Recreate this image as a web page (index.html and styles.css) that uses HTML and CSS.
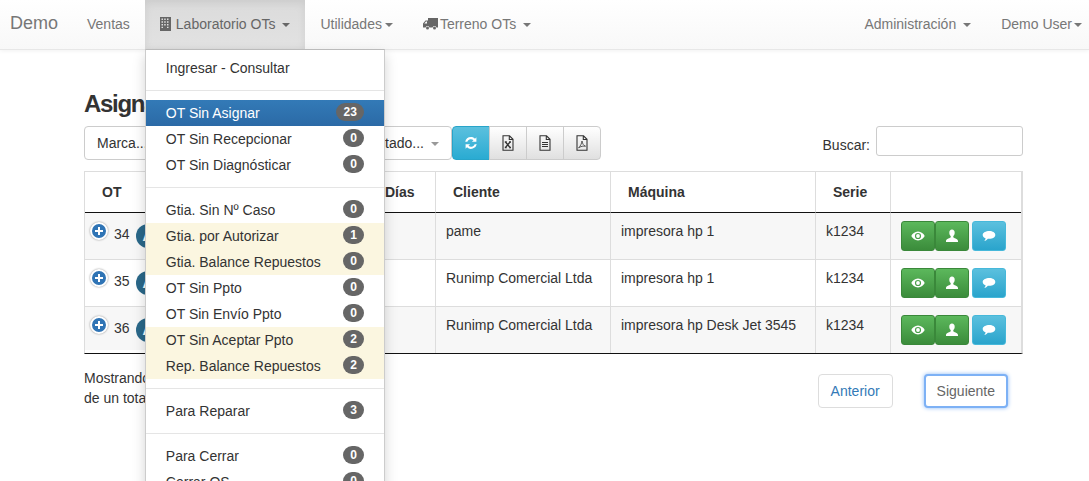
FILE: index.html
```html
<!DOCTYPE html>
<html lang="es">
<head>
<meta charset="utf-8">
<title>Demo</title>
<link rel="stylesheet" href="styles.css">
</head>
<body>
<svg class="sprites" width="0" height="0" aria-hidden="true">
  <symbol id="i-eye" viewBox="0 0 14 14"><path fill="currentColor" fill-rule="evenodd" d="M7 2.6C3.8 2.6 1.3 5 .3 7c1 2 3.5 4.4 6.7 4.4S12.700 9 13.700 7C12.700 5 10.200 2.600 7 2.600zM7 3.900A3.100 3.100 0 1 1 7 10.100 3.100 3.100 0 0 1 7 3.900zM7 5.100A1.900 1.900 0 1 0 7 8.900 1.900 1.900 0 0 0 7 5.100z"/></symbol>
  <symbol id="i-user" viewBox="0 0 14 14"><path fill="currentColor" d="M7 .6c1.700 0 2.700 1.300 2.700 3.100 0 1.400-.6 2.700-1.400 3.300v1.300c0 .7 4.700 1.500 4.700 3.700v.9H1v-.9c0-2.200 4.700-3 4.700-3.700V7C4.900 6.400 4.300 5.100 4.300 3.700 4.300 1.900 5.300.6 7 .6z"/></symbol>
  <symbol id="i-comment" viewBox="0 0 14 14"><path fill="currentColor" d="M7.300 2C10.700 2 13.300 3.600 13.300 5.900S10.700 9.800 7.300 9.800C6.800 9.800 6.300 9.800 5.800 9.700 5 10.700 3.600 11.700 2.300 11.900 3 11.200 3.500 10.200 3.600 9.200 1.800 8.500.7 7.300.7 5.900.7 3.600 3.900 2 7.300 2z"/></symbol>
  <symbol id="i-file" viewBox="0 0 12 16"><path fill="none" stroke="currentColor" stroke-width="1.100" d="M1 .8h6.500L11 4.300V15.200H1zM7.300 1v3.500H11"/></symbol>
</svg>

<header class="navbar">
  <a class="brand">Demo</a>
  <ul class="nav">
    <li class="nav-item">Ventas</li>
    <li class="nav-item is-open">
      <svg class="nav-icon" width="11" height="14" viewBox="0 0 11 14"><path fill="currentColor" fill-rule="evenodd" d="M0 0h11v14H0zM1.500 1.500v1.500h1.500V1.500zM4.200 1.500v1.500h1.500V1.500zM7 1.500v1.500h1.500V1.500zM1.500 4.200v1.500h1.500V4.200zM4.200 4.200v1.500h1.500V4.200zM7 4.200v1.500h1.500V4.200zM1.500 7v1.500h1.500V7zM4.200 7v1.500h1.500V7zM7 7v1.500h1.500V7zM1.500 9.700v1.300h1.500V9.700zM7 9.700v1.300h1.500V9.700z"/></svg>
      <span>Laboratorio OTs</span><i class="caret caret-spaced"></i>
      <ul class="dropdown">
        <li class="dd-item">Ingresar - Consultar</li>
        <li class="dd-divider"></li>
        <li class="dd-item is-active">OT Sin Asignar<span class="badge">23</span></li>
        <li class="dd-item">OT Sin Recepcionar<span class="badge">0</span></li>
        <li class="dd-item">OT Sin Diagnósticar<span class="badge">0</span></li>
        <li class="dd-divider"></li>
        <li class="dd-item">Gtia. Sin Nº Caso<span class="badge">0</span></li>
        <li class="dd-item is-warn">Gtia. por Autorizar<span class="badge">1</span></li>
        <li class="dd-item is-warn">Gtia. Balance Repuestos<span class="badge">0</span></li>
        <li class="dd-item">OT Sin Ppto<span class="badge">0</span></li>
        <li class="dd-item">OT Sin Envío Ppto<span class="badge">0</span></li>
        <li class="dd-item is-warn">OT Sin Aceptar Ppto<span class="badge">2</span></li>
        <li class="dd-item is-warn">Rep. Balance Repuestos<span class="badge">2</span></li>
        <li class="dd-divider"></li>
        <li class="dd-item">Para Reparar<span class="badge">3</span></li>
        <li class="dd-divider"></li>
        <li class="dd-item">Para Cerrar<span class="badge">0</span></li>
        <li class="dd-item">Cerrar OS<span class="badge">0</span></li>
      </ul>
    </li>
    <li class="nav-item">Utilidades<i class="caret caret-near"></i></li>
    <li class="nav-item">
      <svg class="nav-icon nav-icon-truck" width="15" height="12" viewBox="0 0 15 12"><path fill="currentColor" fill-rule="evenodd" d="M5 0h10v9.500h-1.600a2 2 0 0 0-3.800 0H6.400a2 2 0 0 0-3.800 0H0V5.500L2.500 2.500H5zM1.300 5.600h2.700V3.500H3zM4.500 8.500a1.500 1.500 0 1 1 0 3 1.500 1.500 0 0 1 0-3zM11.500 8.500a1.500 1.500 0 1 1 0 3 1.500 1.500 0 0 1 0-3z"/></svg>
      <span>Terreno OTs</span><i class="caret caret-spaced"></i>
    </li>
  </ul>
  <ul class="nav nav-right">
    <li class="nav-item">Administración<i class="caret caret-spaced"></i></li>
    <li class="nav-item nav-item-last">Demo User<i class="caret caret-tight"></i></li>
  </ul>
</header>

<main class="page">
  <h3 class="title">Asignar OT</h3>

  <div class="toolbar">
    <div class="filters">
      <button class="select select-brand" type="button">Marca...</button>
      <button class="select select-state" type="button">Estado...<i class="caret caret-muted"></i></button>
      <button class="tool tool-refresh" type="button" aria-label="Actualizar">
        <svg width="14" height="14" viewBox="0 0 14 14"><path fill="#fff" d="M7 1c1.600 0 3 .6 4 1.700L12.400 1.300V5.800H7.900L9.500 4.200A3.800 3.800 0 0 0 3.300 5.800H1.200A5.900 5.900 0 0 1 7 1zM1.600 8.200H6.100L4.500 9.800A3.800 3.800 0 0 0 10.700 8.200H12.800A5.900 5.900 0 0 1 3 11.300L1.600 12.700z"/></svg>
      </button>
      <button class="tool" type="button" aria-label="Excel">
        <svg class="file" width="12" height="16"><use href="#i-file"/><path fill="none" stroke="currentColor" stroke-width="1.300" d="M3.500 7l4.500 5.500M8 7l-4.500 5.500M2.800 7h2M7 7h2M2.800 12.500h2M7 12.500h2"/></svg>
      </button>
      <button class="tool" type="button" aria-label="Texto">
        <svg class="file" width="12" height="16"><use href="#i-file"/><path fill="none" stroke="currentColor" d="M3 7.500h6M3 9.500h6M3 11.500h6"/></svg>
      </button>
      <button class="tool tool-last" type="button" aria-label="PDF">
        <svg class="file" width="12" height="16"><use href="#i-file"/><path fill="none" stroke="currentColor" stroke-width=".8" d="M6 6c-.4 2.500-1.400 5-3.400 6.800M6 6c.5 3 1.600 4.500 3.500 5.200-2-.3-4.500 0-6.900 1.600"/></svg>
      </button>
    </div>
    <label class="search">Buscar:<input class="search-input" type="text" aria-label="Buscar"></label>
  </div>

  <table class="grid">
    <colgroup>
      <col class="c-ot"><col class="c-dias"><col class="c-cliente"><col class="c-maquina"><col class="c-serie"><col class="c-acciones">
    </colgroup>
    <thead>
      <tr><th>OT</th><th>Días</th><th>Cliente</th><th>Máquina</th><th>Serie</th><th></th></tr>
    </thead>
    <tbody>
      <tr>
        <td class="td-ot"><span class="plus"></span><span class="ot-num">34</span><span class="avatar">A</span></td>
        <td></td><td>pame</td><td>impresora hp 1</td><td>k1234</td>
        <td class="td-actions"><div class="actions"><button class="act act-green" type="button" aria-label="Ver"><svg width="14" height="14"><use href="#i-eye"/></svg></button><button class="act act-green" type="button" aria-label="Asignar"><svg width="14" height="14"><use href="#i-user"/></svg></button><button class="act act-blue" type="button" aria-label="Comentar"><svg width="14" height="14"><use href="#i-comment"/></svg></button></div></td>
      </tr>
      <tr>
        <td class="td-ot"><span class="plus"></span><span class="ot-num">35</span><span class="avatar">A</span></td>
        <td></td><td>Runimp Comercial Ltda</td><td>impresora hp 1</td><td>k1234</td>
        <td class="td-actions"><div class="actions"><button class="act act-green" type="button" aria-label="Ver"><svg width="14" height="14"><use href="#i-eye"/></svg></button><button class="act act-green" type="button" aria-label="Asignar"><svg width="14" height="14"><use href="#i-user"/></svg></button><button class="act act-blue" type="button" aria-label="Comentar"><svg width="14" height="14"><use href="#i-comment"/></svg></button></div></td>
      </tr>
      <tr>
        <td class="td-ot"><span class="plus"></span><span class="ot-num">36</span><span class="avatar">A</span></td>
        <td></td><td>Runimp Comercial Ltda</td><td>impresora hp Desk Jet 3545</td><td>k1234</td>
        <td class="td-actions"><div class="actions"><button class="act act-green" type="button" aria-label="Ver"><svg width="14" height="14"><use href="#i-eye"/></svg></button><button class="act act-green" type="button" aria-label="Asignar"><svg width="14" height="14"><use href="#i-user"/></svg></button><button class="act act-blue" type="button" aria-label="Comentar"><svg width="14" height="14"><use href="#i-comment"/></svg></button></div></td>
      </tr>
    </tbody>
  </table>

  <div class="footer-row">
    <div class="info">Mostrando 1 a 3<br>de un total de 3</div>
    <div class="pager">
      <a class="page-btn">Anterior</a>
      <a class="page-btn is-focus">Siguiente</a>
    </div>
  </div>
</main>
</body>
</html>
```

FILE: styles.css
```css
* { box-sizing: border-box; }

html, body {
  height: 481px;
  overflow: hidden;
}

body {
  margin: 0;
  font: 14px/20px "Liberation Sans", Arial, sans-serif;
  color: #333;
  background: #fff;
}

.sprites { position: absolute; }

ul { list-style: none; margin: 0; padding: 0; }

button { font: inherit; }

/* Navbar */
.navbar {
  display: flex;
  height: 50px;
  padding-left: 10px;
  padding-right: 2px;
  background: linear-gradient(#fff, #f8f8f8);
  border-bottom: 1px solid #e7e7e7;
  box-shadow: 0 1px 4px rgba(0, 0, 0, .06);
  color: #777;
}

.brand {
  font-size: 18px;
  line-height: 47px;
  width: 62px;
}

.nav { display: flex; }
.nav-right { margin-left: auto; }

.nav-item {
  position: relative;
  display: flex;
  align-items: center;
  height: 49px;
  padding: 0 15px 2px;
  white-space: nowrap;
}

.nav-item-last { padding-right: 5px; }

.is-open {
  background: linear-gradient(#dbdbdb, #e2e2e2);
  box-shadow: inset 0 3px 9px rgba(0, 0, 0, .075);
  color: #666;
}

.nav-icon { margin-right: 5px; color: #666; }
.nav-icon-truck { margin-right: 2px; }

.caret {
  display: inline-block;
  width: 0;
  height: 0;
  margin-top: 2px;
  border-top: 4px solid currentColor;
  border-left: 4px solid transparent;
  border-right: 4px solid transparent;
}
.caret-spaced { margin-left: 7px; }
.caret-near { margin-left: 3px; }
.caret-tight { margin-left: 2px; }
.caret-muted { margin-left: 7px; color: #999; }

/* Dropdown */
.dropdown {
  position: absolute;
  z-index: 10;
  top: 49px;
  left: 0;
  width: 240px;
  padding: 5px 0;
  background: #fff;
  border: 1px solid #ccc;
  border-top-color: #bbb;
  box-shadow: 0 6px 12px rgba(0, 0, 0, .175);
  color: #333;
}

.dd-item {
  display: flex;
  justify-content: space-between;
  align-items: flex-start;
  height: 26px;
  padding: 3px 20px;
}

.dd-divider {
  height: 1px;
  margin: 9px 0;
  background: #e5e5e5;
}

.is-active {
  background: linear-gradient(#337ab7, #2b6aa6);
  color: #fff;
}

.is-warn { background: #fbf6e0; }

.badge {
  min-width: 20px;
  height: 18px;
  padding: 3px 7px;
  border-radius: 10px;
  background: #666;
  color: #fff;
  font-size: 12px;
  font-weight: bold;
  line-height: 12px;
  text-align: center;
}

/* Page */
.page { padding: 41px 66px 0 84px; }

.title {
  margin: 0 0 9px;
  font-size: 24px;
  line-height: 26px;
  font-weight: bold;
  letter-spacing: -1.3px;
}

.toolbar {
  display: flex;
  justify-content: space-between;
  align-items: flex-start;
  height: 34px;
  margin-bottom: 11px;
}

.filters { display: flex; }

.select {
  height: 34px;
  padding: 0 12px;
  background: #fff;
  border: 1px solid #ccc;
  border-radius: 4px;
  color: #333;
  text-align: left;
}
.select-brand { width: 140px; }
.select-state {
  display: flex;
  align-items: center;
  justify-content: flex-end;
  width: 228px;
}

.tool {
  display: flex;
  align-items: center;
  justify-content: center;
  width: 38px;
  height: 34px;
  margin-left: -1px;
  padding: 0;
  background: linear-gradient(#fff, #e0e0e0);
  border: 1px solid #ccc;
  color: #333;
}
.tool-last { border-radius: 0 4px 4px 0; }
.tool-refresh {
  margin-left: 0;
  background: linear-gradient(#5bc0de, #2aabd2);
  border-color: #28a4c9;
  border-radius: 4px 0 0 4px;
}

.search {
  display: flex;
  align-items: flex-start;
  line-height: 38px;
}

.search-input {
  width: 147px;
  height: 30px;
  margin-left: 6px;
  border: 1px solid #ccc;
  border-radius: 3px;
  background: #fff;
}

/* Table */
.grid {
  width: 939px;
  table-layout: fixed;
  border-collapse: separate;
  border-spacing: 0;
  border-top: 1px solid #ddd;
  border-left: 1px solid #ddd;
  border-right: 2px solid #ddd;
  border-bottom: 1px solid #111;
}

.c-ot { width: 282px; }
.c-dias { width: 68px; }
.c-cliente { width: 175px; }
.c-maquina { width: 205px; }
.c-serie { width: 75px; }

.grid th {
  height: 41px;
  padding: 0 17px;
  text-align: left;
  font-weight: bold;
  border-left: 1px solid #ddd;
  border-bottom: 1px solid #111;
}

.grid td {
  height: 47px;
  padding: 8px 10px;
  vertical-align: top;
  border-left: 1px solid #ddd;
  border-top: 1px solid #ddd;
}

.grid tbody tr:first-child td { height: 46px; border-top: 0; }

.grid th:first-child,
.grid td:first-child { border-left: 0; }

.grid tbody tr:nth-child(odd) td { background: #f7f7f7; }

.grid .td-ot {
  display: flex;
  align-items: flex-start;
  padding-left: 5px;
  height: 100%;
}

.plus {
  position: relative;
  flex: none;
  width: 18px;
  height: 18px;
  margin: 1px 6px 0 0;
  border: 2px solid #fff;
  border-radius: 50%;
  background: #2f74b5;
  box-shadow: 0 0 2px #888;
}
.plus::before,
.plus::after {
  content: "";
  position: absolute;
  background: #fff;
}
.plus::before { left: 3px; right: 3px; top: 6px; height: 2px; }
.plus::after { top: 3px; bottom: 3px; left: 6px; width: 2px; }

.ot-num { margin-top: 3px; }

.avatar {
  flex: none;
  width: 24px;
  height: 24px;
  margin: 3px 0 0 6px;
  border-radius: 50%;
  background: #2a6889;
  color: #fff;
  font-weight: bold;
  line-height: 24px;
  text-align: center;
}

.actions { display: flex; }

.act {
  display: flex;
  align-items: center;
  justify-content: center;
  width: 34px;
  height: 30px;
  padding: 0;
  color: #fff;
  border-radius: 3px;
  border: 1px solid;
}
.act-green {
  background: linear-gradient(#5cb85c, #3b8c3b);
  border-color: #3a883a;
}
.act-blue {
  margin-left: 3px;
  background: linear-gradient(#5bc0de, #2aa4cc);
  border-color: #46b8da;
}

/* Footer */
.footer-row {
  display: flex;
  justify-content: space-between;
  margin-top: 14px;
}

.pager {
  display: flex;
  gap: 31px;
  margin-top: 6px;
  margin-right: 15px;
}

.page-btn {
  height: 34px;
  padding: 6px 12px;
  border: 1px solid #ddd;
  border-radius: 4px;
  background: #fff;
  color: #337ab7;
}

.is-focus {
  border: 2px solid #7db1f5;
  padding: 5px 11px;
  box-shadow: 0 0 4px #8dbaf5;
  color: #666;
}
```
